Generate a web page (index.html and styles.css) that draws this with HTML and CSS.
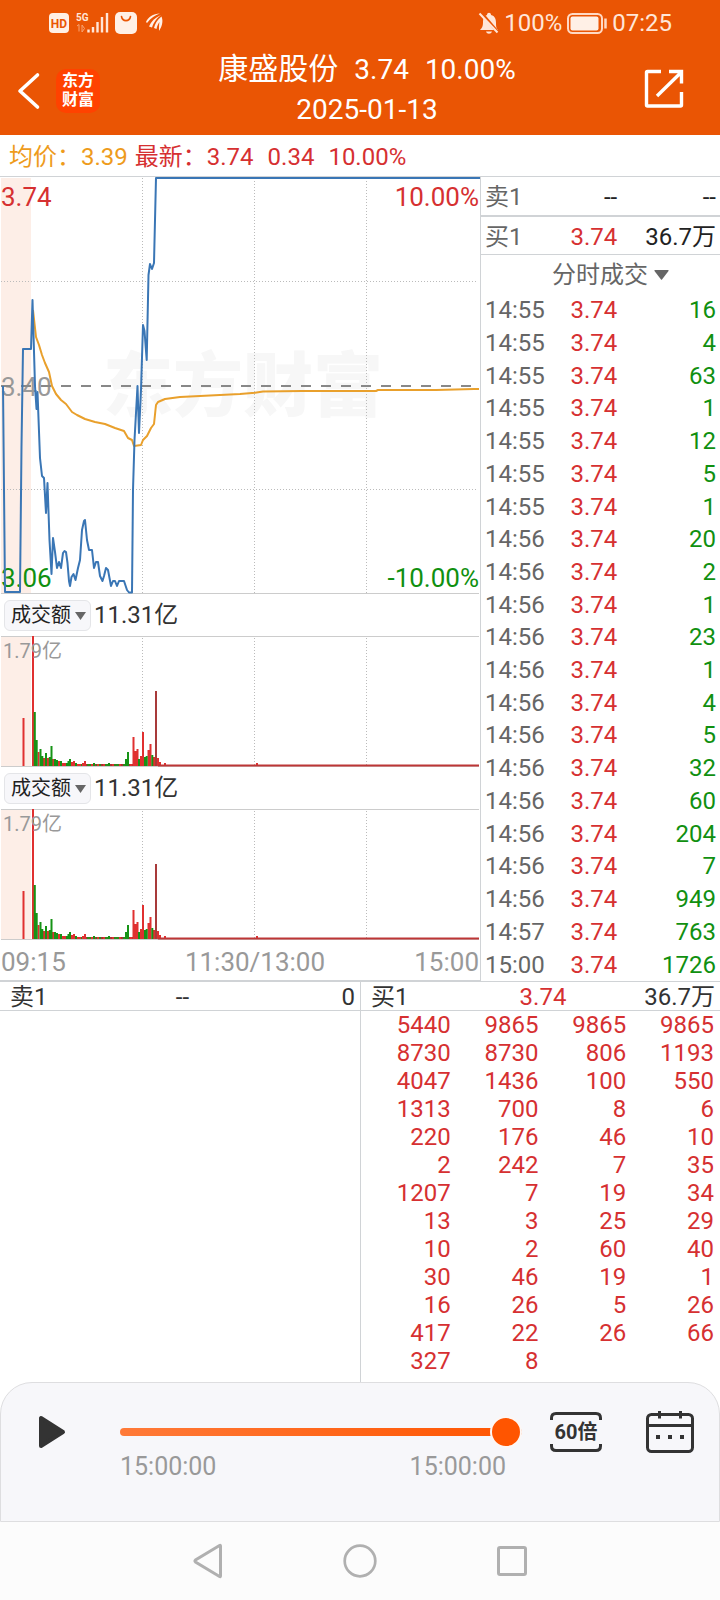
FILE: index.html
```html
<!DOCTYPE html>
<html lang="zh-CN">
<head>
<meta charset="utf-8">
<meta name="viewport" content="width=device-width, initial-scale=1">
<title>康盛股份 分时</title>
<link rel="stylesheet" href="styles.css">
</head>
<body>
<header class="header">
  <div class="status">
    <div class="status-group">
      <svg class="status-icons" width="116" height="24" viewBox="48 11 116 24" aria-hidden="true">
        <rect x="49" y="13" width="20" height="20" rx="4" fill="#fff0e6"/>
        <text x="59" y="27.500" class="hd">HD</text>
        <text x="76" y="21" class="fiveg">5G</text>
        <path d="M77 26l2-1.500v7M82 25v7l2.500-3.500z" stroke="#f7a574" fill="none"/>
        <path d="M88.500 29.500v3M93 27v5.500M97.500 22v10.500M102 17v15.500M107 13v19.500" stroke="#ffe6d8" stroke-width="2.400"/>
        <rect x="115" y="12" width="22" height="22" rx="5" fill="#fff0e6"/>
        <path d="M121.500 16.500c1 5.500 8 5.500 9 0" stroke="#ea5504" stroke-width="1.600" fill="none" stroke-linecap="round"/>
        <g fill="#fff0e6"><path d="M146 22c2-5 7-8 14-8.500-5 1.500-9 4.500-13 9.500z"/><path d="M149 26.500c2-5 6-9 12-11.500-5 4-7 7-9 12.500z"/><path d="M154 28c1-4 3-8 7.500-11.500C163 20 163 25 159 31c0-4 0-7 .5-9-1.500 2-2.500 4-3 7z"/></g>
      </svg>
    </div>
    <div class="status-group">
      <svg width="22" height="24" viewBox="477 11 22 24" aria-hidden="true">
        <path d="M479 30c2-2 3-4 3-7 0-5 1-7 4-8 0-3 4-3 4 0 4 1 5 4 5 8 0 3 0 5 2 7zM485 31.500h6c-1 3-5 3-6 0z" fill="#ffe6d8"/>
        <path d="M480.500 13l17 20" stroke="#ea5504" stroke-width="3"/>
        <path d="M478.500 13.500l18 19" stroke="#ffe6d8" stroke-width="2"/>
      </svg>
      <span>100%</span>
      <svg width="42" height="24" viewBox="564 11 42 24" aria-hidden="true">
        <rect x="566" y="14" width="34" height="19" rx="4.500" fill="none" stroke="#ffd9c4" stroke-width="2"/>
        <rect x="568.500" y="16.500" width="28" height="14" rx="2" fill="#fff0e6"/>
        <path d="M603.500 18.500v10" stroke="#ffd9c4" stroke-width="2.500"/>
      </svg>
      <span>07:25</span>
    </div>
  </div>
  <div class="titlebar">
    <div class="title-left">
      <button class="icon-btn" type="button" aria-label="返回">
        <svg width="24" height="40" viewBox="17 70 24 40"><path d="M37.500 74L20 90l17.500 16" fill="none" stroke="#fff" stroke-width="3.600" stroke-linecap="round" stroke-linejoin="round"/></svg>
      </button>
      <div class="logo">东方<br>财富</div>
    </div>
    <div class="title">
      <h1 class="title-line"><span class="stock-name">康盛股份</span><span>3.74</span><span>10.00%</span></h1>
      <div>2025-01-13</div>
    </div>
    <div class="title-right">
      <button class="icon-btn" type="button" aria-label="分享">
        <svg width="40" height="40" viewBox="644 70 40 40"><path d="M661 72.500h-13.500q-1 0-1 1v32.500q0 1 1 1h33q1 0 1-1v-13M657 97l24-23.500M669 72.500h12.500v12" fill="none" stroke="#fff" stroke-width="3.400"/></svg>
      </button>
    </div>
  </div>
</header>

<div class="summary">
  <span class="avg">均价：3.39</span>
  <span class="latest"><span>最新：3.74</span><span>0.34</span><span>10.00%</span></span>
</div>

<main>
  <div class="market">
    <section class="charts">
      <svg class="chart" viewBox="0 177 480 417" role="img" aria-label="分时走势">
        <rect x="1" y="178" width="30" height="415" fill="#fdeee7"/>
        <text x="103" y="411" class="watermark">东方财富</text>
        <path class="grid" d="M1 281.500h476M1 489.500h476M142.500 178v415M254.500 178v415M366.500 178v415"/>
        <path d="M1 593.500h478" stroke="#ccc"/>
        <text x="1" y="206" class="lbl up">3.74</text>
        <text x="479" y="206" class="lbl up end">10.00%</text>
        <text x="1" y="396" class="lbl muted">3.40</text>
        <text x="1" y="587" class="lbl down">3.06</text>
        <text x="479" y="587" class="lbl down end">-10.00%</text>
        <path d="M1 386h478" stroke="#888" stroke-width="2" stroke-dasharray="10 10"/>
        <path class="avg-line" d="M33 310L36 337 39 345 42 355 45 363 49 372 52 386 56 394 61 400 66 404 72 412 77 415 85 419 95 422 105 424 115 428 124 431 128 438 132 440 134 446 141 445 143 440 147 436 151 428 154 424 156 405 158 402 165 399 180 397 200 396 220 395 240 394 255 392.700 263 391.500 302 391 376 391 378 390 436 390 474 389 479 389"/>
        <path class="price-line" d="M3 386L5 592H20L21.500 446 23 349H31L32.500 300 35 386 36.500 409 37.500 392 40 458 42 476 44 478 46 513 47.500 483 49.500 540 51.500 574 53 538 55 552 57 568 59 562 61 568 63 553 64.500 551 66 552 67.500 563 69 581 70 586 71.500 577 73.500 574 75.500 580 78 568 80 560 82 530 84 521 85 520 87 540 89 550H92L94 568 96 562H98L100 576 102.500 581 104 576 106 568 108 570 111 586 113 581H115L117 586 119 581H124L127 590 129 592.500H132L133 490 134.500 440 137.500 386 139 433 141 390 143 325 144.500 331 146.700 360 148.500 275 150 264 152 269 154 263 156 178H480"/>
      </svg>

      <div class="indicator"><button class="pick" type="button">成交额<svg width="11" height="9" viewBox="0 0 11 9" aria-hidden="true"><path d="M0 1h11L5.500 9z" fill="#666"/></svg></button><span>11.31亿</span></div>
      <svg class="chart" viewBox="0 0 480 131" role="img" aria-label="成交额">
        <defs>
          <g id="volume">
            <rect x="1" y="0" width="30" height="130" fill="#fdeee7"/>
            <path class="grid" d="M142.500 2v128M254.500 2v128M366.500 2v128"/>
            <path d="M1 .5h478M1 130.500h478" stroke="#ccc"/>
            <path d="M58 129H134" stroke="#a83030" stroke-width="2"/>
            <path d="M60 129H126" stroke="#2c8a1c" stroke-width="2" stroke-dasharray="5 4"/>
            <path stroke="#e03030" stroke-width="2" fill="none" d="M23.500 130v-48M33 130v-130M38.500 130v-14M44 130v-8M48 130v-8M53 130v-7M59 130v-5M63 130v-3M65 130v-3M72 130v-4M74 130v-5M78 130v-2M80 130v-2M83 130v-3M85 130v-5M92 130v-2M98 130v-2M104 130v-2M113 130v-2M120 130v-2M131 130v-2M133.500 130v-29M135.500 130v-15M137.500 130v-17M141 130v-10M143 130v-34M148.500 130v-16M150.500 130v-22M154 130v-9M158 130v-8M160 130v-4M165 130v-3M257 130v-3"/>
            <path stroke="#169316" stroke-width="2" fill="none" d="M34.800 130v-54M36.700 130v-26M40.500 130v-17M42.300 130v-10M46 130v-13M49.800 130v-9M51.500 130v-20M55 130v-7M57 130v-6M61 130v-5M67 130v-3M68.500 130v-5M70 130v-7M76 130v-3M94 130v-3M109 130v-3M126 130v-7M128 130v-14M139 130v-7M145 130v-9M146.700 130v-10M152.300 130v-11"/>
            <path d="M156 130v-75" stroke="#a83a3a" stroke-width="2"/>
            <path d="M158 129.500h321" stroke="#bd3636" stroke-width="2"/>
            <text x="3" y="22" class="vol-lbl">1.79亿</text>
          </g>
        </defs>
        <use href="#volume"/>
      </svg>

      <div class="indicator"><button class="pick" type="button">成交额<svg width="11" height="9" viewBox="0 0 11 9" aria-hidden="true"><path d="M0 1h11L5.500 9z" fill="#666"/></svg></button><span>11.31亿</span></div>
      <svg class="chart" viewBox="0 0 480 131" role="img" aria-label="成交额"><use href="#volume"/></svg>
      <div class="axis"><span>09:15</span><span class="axis-noon">11:30/13:00</span><span>15:00</span></div>
    </section>

    <section class="side">
      <div class="quote quote-sell"><span>卖1</span><span class="dark">--</span><span class="dark">--</span></div>
      <div class="quote"><span>买1</span><span class="up">3.74</span><span class="dark">36.7万</span></div>
      <button class="ticks-head" type="button">分时成交<svg width="15" height="10" viewBox="0 0 15 10" aria-hidden="true"><path d="M1 0h13q1 0 .5 1L8 9.500q-.5.500-1 0L.5 1Q0 0 1 0z" fill="#666"/></svg></button>
      <table class="ticks">
        <tbody>
          <tr><td>14:55</td><td>3.74</td><td>16</td></tr>
          <tr><td>14:55</td><td>3.74</td><td>4</td></tr>
          <tr><td>14:55</td><td>3.74</td><td>63</td></tr>
          <tr><td>14:55</td><td>3.74</td><td>1</td></tr>
          <tr><td>14:55</td><td>3.74</td><td>12</td></tr>
          <tr><td>14:55</td><td>3.74</td><td>5</td></tr>
          <tr><td>14:55</td><td>3.74</td><td>1</td></tr>
          <tr><td>14:56</td><td>3.74</td><td>20</td></tr>
          <tr><td>14:56</td><td>3.74</td><td>2</td></tr>
          <tr><td>14:56</td><td>3.74</td><td>1</td></tr>
          <tr><td>14:56</td><td>3.74</td><td>23</td></tr>
          <tr><td>14:56</td><td>3.74</td><td>1</td></tr>
          <tr><td>14:56</td><td>3.74</td><td>4</td></tr>
          <tr><td>14:56</td><td>3.74</td><td>5</td></tr>
          <tr><td>14:56</td><td>3.74</td><td>32</td></tr>
          <tr><td>14:56</td><td>3.74</td><td>60</td></tr>
          <tr><td>14:56</td><td>3.74</td><td>204</td></tr>
          <tr><td>14:56</td><td>3.74</td><td>7</td></tr>
          <tr><td>14:56</td><td>3.74</td><td>949</td></tr>
          <tr><td>14:57</td><td>3.74</td><td>763</td></tr>
          <tr><td>15:00</td><td>3.74</td><td>1726</td></tr>
        </tbody>
      </table>
    </section>
  </div>

  <div class="queues">
    <section class="queue">
      <div class="queue-head"><span>卖1</span><span>--</span><span>0</span></div>
    </section>
    <section class="queue queue-buy">
      <div class="queue-head"><span>买1</span><span class="up">3.74</span><span>36.7万</span></div>
      <table class="orders">
        <tbody>
          <tr><td>5440</td><td>9865</td><td>9865</td><td>9865</td></tr>
          <tr><td>8730</td><td>8730</td><td>806</td><td>1193</td></tr>
          <tr><td>4047</td><td>1436</td><td>100</td><td>550</td></tr>
          <tr><td>1313</td><td>700</td><td>8</td><td>6</td></tr>
          <tr><td>220</td><td>176</td><td>46</td><td>10</td></tr>
          <tr><td>2</td><td>242</td><td>7</td><td>35</td></tr>
          <tr><td>1207</td><td>7</td><td>19</td><td>34</td></tr>
          <tr><td>13</td><td>3</td><td>25</td><td>29</td></tr>
          <tr><td>10</td><td>2</td><td>60</td><td>40</td></tr>
          <tr><td>30</td><td>46</td><td>19</td><td>1</td></tr>
          <tr><td>16</td><td>26</td><td>5</td><td>26</td></tr>
          <tr><td>417</td><td>22</td><td>26</td><td>66</td></tr>
          <tr><td>327</td><td>8</td><td></td><td></td></tr>
        </tbody>
      </table>
    </section>
  </div>
</main>

<footer>
  <div class="player">
    <button class="icon-btn play" type="button" aria-label="播放">
      <svg width="28" height="34" viewBox="38 1415 28 34"><path d="M41 1418v28l22-14z" fill="#333" stroke="#333" stroke-width="4" stroke-linejoin="round"/></svg>
    </button>
    <div class="progress">
      <input class="range" type="range" min="0" max="100" value="100" aria-label="播放进度">
      <div class="times"><span>15:00:00</span><span>15:00:00</span></div>
    </div>
    <button class="speed" type="button">
      <svg class="speed-frame" width="52" height="40" viewBox="0 0 52 40" aria-hidden="true"><path d="M1.500 8V6Q1.500 1.500 6 1.500h40Q50.500 1.500 50.500 6v2M1.500 32v2q0 4.500 4.500 4.500h40q4.500 0 4.500-4.500v-2" fill="none" stroke="#333" stroke-width="3"/></svg>
      <span>60倍</span>
    </button>
    <button class="icon-btn calendar" type="button" aria-label="日历">
      <svg width="50" height="44" viewBox="645 1409 50 44"><g fill="none" stroke="#333" stroke-width="3"><rect x="647.500" y="1413.500" width="45" height="37" rx="4"/><path d="M648 1424.500h44M659.500 1410v7.500M680.500 1410v7.500"/></g><path d="M656 1434h4v4h-4zM668 1434h4v4h-4zM680 1434h4v4h-4z" fill="#333"/></svg>
    </button>
  </div>
  <nav class="sysnav">
    <button class="icon-btn" type="button" aria-label="返回键"><svg width="32" height="36" viewBox="190 1543 32 36"><path d="M218.500 1546v30q0 1-1 .5l-24-14.500q-1-1 0-2l24-14.500q1-.5 1 .5z" fill="none" stroke="#b0b0b0" stroke-width="3"/></svg></button>
    <button class="icon-btn" type="button" aria-label="主页键"><svg width="36" height="36" viewBox="342 1543 36 36"><circle cx="360" cy="1561" r="15.300" fill="none" stroke="#b0b0b0" stroke-width="2.700"/></svg></button>
    <button class="icon-btn" type="button" aria-label="任务键"><svg width="32" height="36" viewBox="496 1543 32 36"><rect x="498.500" y="1547.500" width="27" height="27" rx="1.500" fill="none" stroke="#b0b0b0" stroke-width="3"/></svg></button>
  </nav>
</footer>
</body>
</html>
```
FILE: styles.css
```css
* { box-sizing: border-box; }

body {
  margin: 0;
  min-height: 100vh;
  display: flex;
  flex-direction: column;
  background: #fff;
  color: #333;
  font-family: Roboto, "Noto Sans CJK SC", sans-serif;
  font-size: 24px;
  line-height: 28px;
}

button {
  font: inherit;
  color: inherit;
  border: 0;
  padding: 0;
  background: none;
}

svg { display: block; }

table {
  border-collapse: collapse;
  table-layout: fixed;
}

td { padding: 0; }

.up { color: #d63031; fill: #d63031; }
.down { fill: #109010; }
.muted { fill: #999; }
.dark { color: #222; }

.header {
  background: #ea5504;
  color: #fff;
}

.status {
  display: flex;
  justify-content: space-between;
  align-items: center;
  height: 46px;
  padding: 0 48px;
  color: #ffe6d8;
}

.status-group {
  display: flex;
  align-items: center;
  gap: 4px;
}

.hd { font-size: 12px; font-weight: 700; fill: #ea5504; text-anchor: middle; }
.fiveg { font-size: 10px; font-weight: 700; fill: #ffe6d8; }

.titlebar {
  display: flex;
  align-items: center;
  height: 89px;
}

.title-left {
  display: flex;
  align-items: center;
  gap: 15px;
  width: 102px;
  padding-left: 17px;
}

.logo {
  width: 44px;
  height: 44px;
  padding-top: 2px;
  border-radius: 10px;
  background: #ff4200;
  font-size: 16px;
  font-weight: 700;
  line-height: 19px;
  text-align: center;
}

.title {
  flex: 1;
  padding-bottom: 3px;
  font-size: 28px;
  line-height: 40px;
  text-align: center;
}

.title-line {
  display: flex;
  justify-content: center;
  align-items: baseline;
  gap: 16px;
  margin: 0;
  font-size: 28px;
  font-weight: 400;
}

.stock-name { font-size: 30px; }

.title-right { padding: 2px 36px 0 12px; }

.summary {
  display: flex;
  align-items: center;
  gap: 7px;
  height: 41px;
  padding: 2px 0 0 9px;
}

.avg { color: #ee9b1c; }

.latest {
  display: flex;
  gap: 14px;
  color: #d63031;
}

.market {
  display: grid;
  grid-template-columns: 2fr 1fr;
  border-top: 1px solid #d0d3d6;
  border-bottom: 1px solid #d0d3d6;
}

.chart {
  width: 100%;
  height: auto;
}

.grid { stroke: #bbb; stroke-dasharray: 1 2; }
.avg-line { fill: none; stroke: #e9a02c; stroke-width: 2; stroke-linejoin: round; }
.price-line { fill: none; stroke: #3a76b5; stroke-width: 2; stroke-linejoin: round; }
.lbl { font-size: 26px; }
.end { text-anchor: end; }
.watermark { font-size: 70px; font-weight: 900; fill: #f7f7f7; }
.vol-lbl { font-size: 20px; fill: #999; }

.indicator {
  display: flex;
  align-items: center;
  gap: 3px;
  height: 42px;
  padding-left: 4px;
}

.pick {
  display: flex;
  align-items: center;
  gap: 4px;
  height: 31px;
  padding: 0 4px 0 6px;
  border: 1px solid #e4e5e8;
  border-radius: 6px;
  background: #f7f7fa;
  font-size: 20px;
  color: #222;
}

.axis {
  display: grid;
  grid-template-columns: auto 1fr auto;
  align-items: center;
  height: 41px;
  padding: 3px 1px 0;
  border-bottom: 1px solid #d0d3d6;
  font-size: 26px;
  color: #999;
}

.axis-noon {
  padding-left: 30px;
  text-align: center;
}

.side {
  display: flex;
  flex-direction: column;
  border-left: 1px solid #d0d3d6;
  color: #666;
}

.quote {
  display: grid;
  grid-template-columns: 33% 24% 43%;
  align-items: center;
  height: 38px;
  padding-top: 2px;
  border-bottom: 1px solid #d0d3d6;
  text-align: right;
}

.quote-sell { height: 40px; border-bottom-width: 2px; }

.quote span:first-child { text-align: left; padding-left: 4px; }
.quote span:last-child { padding-right: 4px; }

.ticks-head {
  display: flex;
  justify-content: center;
  align-items: center;
  gap: 6px;
  height: 39px;
  padding-left: 20px;
}

.ticks {
  flex: 1;
  width: 100%;
}

.ticks td { text-align: right; }
.ticks td:nth-child(1) { width: 33%; padding-left: 4px; text-align: left; }
.ticks td:nth-child(2) { width: 24%; color: #d63031; }
.ticks td:nth-child(3) { padding-right: 4px; color: #109010; }

main {
  flex: 1;
  display: flex;
  flex-direction: column;
}

.queues {
  flex: 1;
  display: grid;
  grid-template-columns: 1fr 1fr;
}

.queue-buy { border-left: 1px solid #d0d3d6; }

.queue-head {
  display: grid;
  grid-template-columns: 1fr 1fr 1fr;
  align-items: center;
  height: 29px;
  padding: 1px 5px 0 10px;
  border-bottom: 1px solid #d0d3d6;
  text-align: center;
}

.queue-head span:first-child { text-align: left; }
.queue-head span:last-child { text-align: right; }

.orders {
  width: calc(100% - 8px);
  margin-left: auto;
  color: #d63031;
}

.orders td {
  height: 28px;
  padding-right: 6px;
  text-align: right;
}

.player {
  display: flex;
  align-items: flex-start;
  height: 140px;
  padding: 27px 24px 0 37px;
  border: 1px solid #dedee0;
  border-radius: 32px 32px 0 0;
  background: #f7f7fa;
}

.play { margin-top: 5px; }

.progress {
  flex: 1;
  margin: 6px 28px 0 54px;
}

.range {
  appearance: none;
  display: block;
  width: 100%;
  height: 32px;
  margin: 0;
  background: none;
}

.range::-webkit-slider-runnable-track {
  height: 8px;
  border-radius: 4px;
  background: linear-gradient(90deg, #ff7a38, #ff5500);
}

.range::-webkit-slider-thumb {
  appearance: none;
  width: 32px;
  height: 32px;
  margin-top: -12px;
  border: 2px solid #fdf7f4;
  border-radius: 50%;
  background: #ff5500;
}

.times {
  display: flex;
  justify-content: space-between;
  padding: 5px 16px 0 0;
  font-size: 25px;
  color: #999;
}

.speed {
  display: grid;
  place-items: center;
  margin-top: 2px;
  font-size: 20px;
  font-weight: 700;
}

.speed > * { grid-area: 1 / 1; }

.calendar { margin-left: 43px; }

.sysnav {
  display: flex;
  justify-content: center;
  align-items: center;
  gap: 118px;
  height: 78px;
  background: #fcfcfc;
}
```
